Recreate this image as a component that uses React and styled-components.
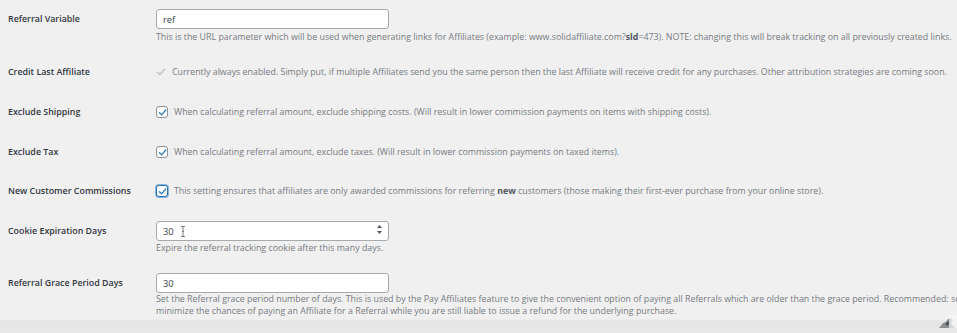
import React from "react";
import styled, { createGlobalStyle } from "styled-components";

const GlobalStyle = createGlobalStyle`
  html, body {
    margin: 0;
    padding: 0;
    background: #f0f0f1;
    overflow: hidden;
  }
  body {
    font-family: "Open Sans", "Liberation Sans", sans-serif;
    width: 957px;
    height: 333px;
  }
`;

const Page = styled.div`
  position: relative;
  width: 957px;
  height: 333px;
  overflow: hidden;
  background: linear-gradient(to bottom, #f0f0f1 0, #f0f0f1 319px, #e6e6e7 321px, #e8e8e9 333px);
`;

const Table = styled.div`
  display: flex;
  flex-direction: column;
  padding-top: 9px;
`;

const Row = styled.div`
  display: grid;
  grid-template-columns: 148px 1fr;
  padding-left: 8px;
  margin-top: ${(p) => p.$gap ?? 19}px;
`;

const Label = styled.div`
  font-size: 8.9px;
  font-weight: 600;
  color: #32383e;
  line-height: 20px;
  white-space: nowrap;
`;

const Field = styled.div`
  display: flex;
  flex-direction: column;
`;

const InputBox = styled.div`
  position: relative;
  box-sizing: border-box;
  width: 233px;
  height: 20px;
  background: #fff;
  border: 1px solid #a7aaad;
  border-radius: 3px;
  display: flex;
  align-items: center;
  padding-left: 6px;
  font-size: 9.3px;
  color: #3c434a;
`;

const Spinner = styled.div`
  position: absolute;
  right: 6px;
  top: 3px;
  display: flex;
  flex-direction: column;
  align-items: center;
  gap: 3px;
`;

const Desc = styled.div`
  font-size: 8.85px;
  color: #767b80;
  line-height: 12px;
  margin-top: ${(p) => p.$space ?? 2}px;
  white-space: nowrap;

  b {
    font-weight: 700;
    color: #50575e;
  }
`;

const CheckLine = styled.div`
  display: flex;
  align-items: center;
  gap: 6px;
  height: 20px;
  font-size: 8.85px;
  color: #767b80;
  white-space: nowrap;

  b {
    font-weight: 700;
    color: #50575e;
  }
`;

const Box = styled.span`
  box-sizing: border-box;
  width: 12px;
  height: 12px;
  border: ${(p) => (p.$focus ? "1.5px solid #2271b1" : "1px solid #8c8f94")};
  border-radius: 3px;
  background: #fff;
  display: flex;
  align-items: center;
  justify-content: center;
  box-shadow: ${(p) => (p.$focus ? "0 0 0 1px #8cb4d6" : "none")};
`;

const Corner = styled.div`
  position: absolute;
  right: 0;
  bottom: 0;
`;

const Tick = ({ color = "#3582c4", size = 9 }) => (
  <svg width={size} height={size} viewBox="0 0 10 10">
    <path d="M1.5 5.2 L4 7.6 L8.6 2.2" fill="none" stroke={color} strokeWidth="1.5" strokeLinecap="round" strokeLinejoin="round" />
  </svg>
);

const Checkbox = ({ focus }) => (
  <Box $focus={focus}>
    <Tick />
  </Box>
);

const Arrows = () => (
  <Spinner>
    <svg width="5" height="3" viewBox="0 0 5 3"><path d="M0 3 L2.5 0 L5 3 Z" fill="#50575e" /></svg>
    <svg width="5" height="3" viewBox="0 0 5 3"><path d="M0 0 L2.5 3 L5 0 Z" fill="#50575e" /></svg>
  </Spinner>
);

const IBeam = () => (
  <svg width="6" height="11" viewBox="0 0 6 11" style={{ marginLeft: 6 }}>
    <path d="M1 0.5 H5 M3 0.5 V10.5 M1 10.5 H5 M2 5.5 H4" stroke="#6b7075" strokeWidth="0.9" fill="none" />
  </svg>
);

const App = () => (
  <>
    <GlobalStyle />
    <Page>
      <Table>
        <Row $gap={0}>
          <Label>Referral Variable</Label>
          <Field>
            <InputBox>ref</InputBox>
            <Desc>
              This is the URL parameter which will be used when generating links for Affiliates (example: www.solidaffiliate.com?<b>sld</b>=473). NOTE: changing this will break tracking on all previously created links.
            </Desc>
          </Field>
        </Row>
        <Row>
          <Label>Credit Last Affiliate</Label>
          <CheckLine>
            <Tick color="#c3c4c7" size={10} />
            Currently always enabled. Simply put, if multiple Affiliates send you the same person then the last Affiliate will receive credit for any purchases. Other attribution strategies are coming soon.
          </CheckLine>
        </Row>
        <Row $gap={20}>
          <Label>Exclude Shipping</Label>
          <CheckLine>
            <Checkbox />
            When calculating referral amount, exclude shipping costs. (Will result in lower commission payments on items with shipping costs).
          </CheckLine>
        </Row>
        <Row $gap={20}>
          <Label>Exclude Tax</Label>
          <CheckLine>
            <Checkbox />
            When calculating referral amount, exclude taxes. (Will result in lower commission payments on taxed items).
          </CheckLine>
        </Row>
        <Row>
          <Label>New Customer Commissions</Label>
          <CheckLine>
            <Checkbox focus />
            <span>
              This setting ensures that affiliates are only awarded commissions for referring <b>new</b> customers (those making their first-ever purchase from your online store).
            </span>
          </CheckLine>
        </Row>
        <Row $gap={20}>
          <Label>Cookie Expiration Days</Label>
          <Field>
            <InputBox>
              30
              <IBeam />
              <Arrows />
            </InputBox>
            <Desc $space={1}>Expire the referral tracking cookie after this many days.</Desc>
          </Field>
        </Row>
        <Row>
          <Label>Referral Grace Period Days</Label>
          <Field>
            <InputBox>30</InputBox>
            <Desc $space={0}>
              Set the Referral grace period number of days. This is used by the Pay Affiliates feature to give the convenient option of paying all Referrals which are older than the grace period. Recommended: set
              <br />
              minimize the chances of paying an Affiliate for a Referral while you are still liable to issue a refund for the underlying purchase.
            </Desc>
          </Field>
        </Row>
      </Table>
      <Corner>
        <svg width="28" height="14" viewBox="0 0 28 14">
          <path d="M10 14 L14 9 L17 8 L19 5 L22 4 L24 6 L22 8 L23 11 L26 14 Z" fill="#8c8f94" />
          <path d="M16 10 L19 7 L21 9 L19 12 Z" fill="#50575e" />
          <rect x="20" y="1" width="8" height="13" fill="#f6f7f7" opacity="0.7" />
        </svg>
      </Corner>
    </Page>
  </>
);

export default App;
